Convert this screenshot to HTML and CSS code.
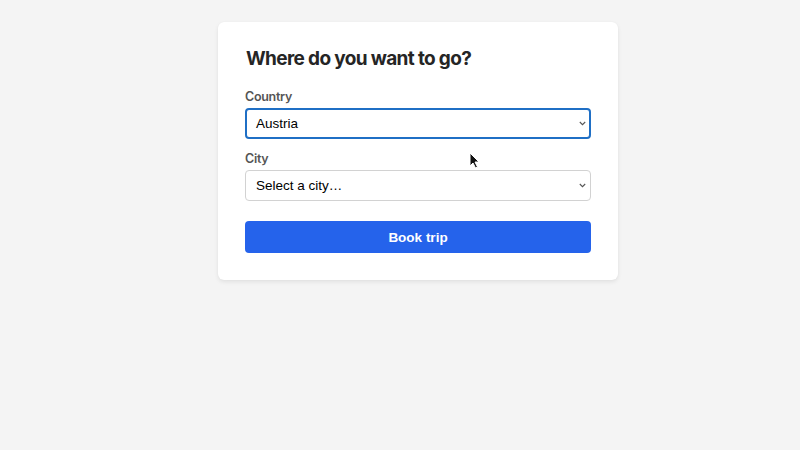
FILE: index.html
```html
<!DOCTYPE html>
<html>
<head>
<meta charset="utf-8">
<link rel="stylesheet" href="styles.css">
</head>
<body>
<div class="page">
  <form class="card">
    <h1 class="title">Where do you want to go?</h1>
    <div class="field">
      <label class="label">Country</label>
      <div class="select focused"><span>Austria</span><svg class="chev" width="7" height="5" viewBox="0 0 7 5"><path d="M0.8 1l2.7 2.7L6.2 1" fill="none" stroke="#555" stroke-width="1.1"/></svg></div>
    </div>
    <div class="field">
      <label class="label">City</label>
      <div class="select"><span>Select a city…</span><svg class="chev" width="7" height="5" viewBox="0 0 7 5"><path d="M0.8 1l2.7 2.7L6.2 1" fill="none" stroke="#555" stroke-width="1.1"/></svg></div>
    </div>
    <button class="btn" type="button">Book trip</button>
  </form>
  <svg class="cursor" width="12" height="18" viewBox="0 0 12 18"><path d="M1 1v13l3-3 2.5 5 2-1-2.5-5H10z" fill="#111" stroke="#fff" stroke-width="1"/></svg>
</div>
</body>
</html>
```
FILE: styles.css
```css
html, body { margin: 0; padding: 0; }
body {
  background: #f4f4f4;
  font-family: Inter, "Liberation Sans", sans-serif;
  width: 800px; height: 450px; overflow: hidden;
}
.page {
  position: relative;
  display: flex;
  justify-content: center;
  padding-top: 22px;
  padding-left: 36px;
}
.card {
  width: 346px;
  background: #fff;
  border-radius: 6px;
  padding: 25px 27px 27px;
  box-shadow: 0 2px 4px rgba(0,0,0,0.08), 0 0 1px rgba(0,0,0,0.06);
  display: flex;
  flex-direction: column;
}
.title {
  margin: 0 0 18px;
  padding-left: 1px;
  font-size: 19px;
  line-height: 24px;
  font-weight: 700;
  color: #252525;
  letter-spacing: -0.65px;
}
.field {
  display: flex;
  flex-direction: column;
  margin-bottom: 12px;
}
.label {
  font-size: 12.5px;
  line-height: 15px;
  font-weight: 600;
  color: #555;
  margin-bottom: 4px;
  letter-spacing: -0.3px;
}
.select {
  box-sizing: border-box;
  height: 31px;
  border: 1px solid #d2d2d2;
  border-radius: 4px;
  display: flex;
  align-items: center;
  justify-content: space-between;
  padding: 0 4px 0 10px;
  font-family: "Liberation Sans", Arial, sans-serif;
  font-size: 13.5px;
  color: #000;
}
.select.focused {
  border: 2px solid #1f6fc5;
  padding: 0 3px 0 9px;
}
.chev { display: block; }
.btn {
  margin-top: 8px;
  height: 32px;
  border: 0;
  border-radius: 4px;
  background: #2563eb;
  color: #fff;
  font-family: "Liberation Sans", Arial, sans-serif;
  font-weight: 700;
  font-size: 13.5px;
}
.cursor {
  position: absolute;
  left: 469px;
  top: 152px;
}
```
